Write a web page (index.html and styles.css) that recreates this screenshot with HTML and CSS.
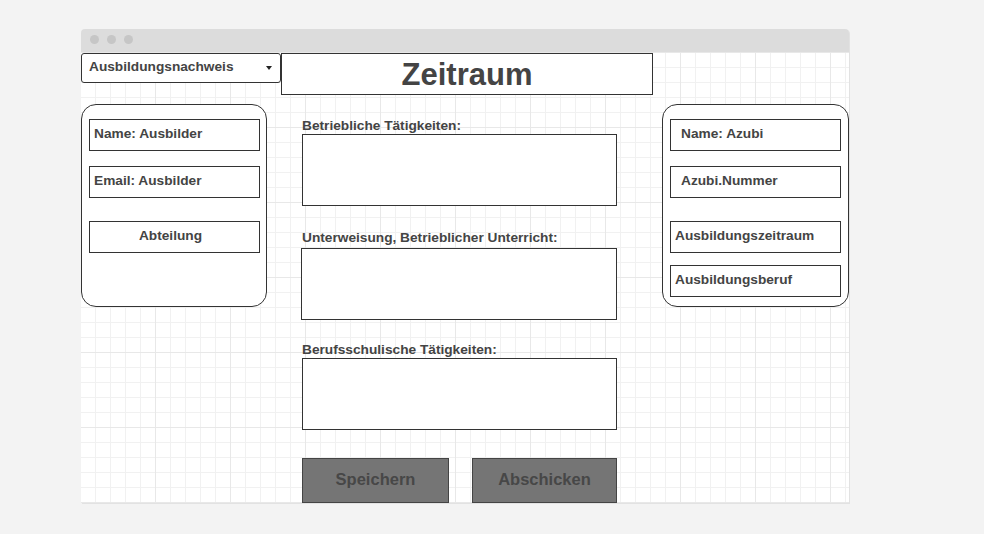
FILE: index.html
```html
<!DOCTYPE html>
<html lang="de">
<head>
<meta charset="utf-8">
<title>Ausbildungsnachweis</title>
<link rel="stylesheet" href="styles.css">
</head>
<body>
<div class="window">
  <div class="titlebar">
    <span class="dot"></span><span class="dot"></span><span class="dot"></span>
  </div>
  <div class="canvas">
    <div class="header">
      <div class="dropdown"><span class="dropdown-text">Ausbildungsnachweis</span><span class="caret"></span></div>
      <div class="title">Zeitraum</div>
    </div>
    <div class="main">
      <div class="card card-left">
        <div class="field">Name: Ausbilder</div>
        <div class="field">Email: Ausbilder</div>
        <div class="field field-center field-gap">Abteilung</div>
      </div>
      <div class="center">
        <div class="section s1">
          <div class="label">Betriebliche Tätigkeiten:</div>
          <div class="textbox"></div>
        </div>
        <div class="section s2">
          <div class="label">Unterweisung, Betrieblicher Unterricht:</div>
          <div class="textbox textbox-wide"></div>
        </div>
        <div class="section s3">
          <div class="label">Berufsschulische Tätigkeiten:</div>
          <div class="textbox"></div>
        </div>
        <div class="buttons">
          <div class="btn btn-save">Speichern</div>
          <div class="btn btn-send">Abschicken</div>
        </div>
      </div>
      <div class="card card-right">
        <div class="field field-indent">Name: Azubi</div>
        <div class="field field-indent">Azubi.Nummer</div>
        <div class="field field-gap">Ausbildungszeitraum</div>
        <div class="field">Ausbildungsberuf</div>
      </div>
    </div>
  </div>
</div>
</body>
</html>
```
FILE: styles.css
```css
* { box-sizing: border-box; }
html, body { margin: 0; padding: 0; }
body {
  background: #f3f3f3;
  font-family: "Liberation Sans", Arial, sans-serif;
  color: #444;
  width: 984px;
  height: 534px;
  overflow: hidden;
}
.window {
  margin: 29px 0 0 81px;
  width: 768px;
  height: 474px;
  display: flex;
  flex-direction: column;
  box-shadow: 1px 1px 0 #e2e2e2;
  border-radius: 4px 4px 0 0;
}
.titlebar {
  height: 23px;
  background: #dcdcdc;
  border-radius: 4px 4px 0 0;
  display: flex;
  align-items: flex-start;
  gap: 8px;
  padding: 6px 0 0 9px;
}
.dot {
  width: 9px;
  height: 9px;
  border-radius: 50%;
  background: #c6c6c6;
}
.canvas {
  flex: 1;
  background-color: #fff;
  background-image:
    linear-gradient(to right, #e8e8e8 1px, transparent 1px),
    linear-gradient(to bottom, #e8e8e8 1px, transparent 1px),
    linear-gradient(to right, #f1f1f1 1px, transparent 1px),
    linear-gradient(to bottom, #f1f1f1 1px, transparent 1px);
  background-size: 75px 75px, 75px 75px, 15px 15px, 15px 15px;
  background-position: -1px 0, -1px 0, -1px 0, -1px 0;
  display: flex;
  flex-direction: column;
}
.header {
  display: flex;
  align-items: flex-start;
  margin-top: 1px;
}
.dropdown {
  width: 200px;
  height: 30px;
  border: 1px solid #333;
  border-radius: 3px;
  background: #fff;
  display: flex;
  align-items: flex-start;
  padding: 5px 8px 0 7px;
  font-weight: bold;
  font-size: 13.7px;
  line-height: 15px;
}
.caret {
  margin-left: auto;
  margin-top: 7px;
  width: 0;
  height: 0;
  border-left: 3px solid transparent;
  border-right: 3px solid transparent;
  border-top: 4px solid #222;
}
.title {
  width: 372px;
  height: 42px;
  border: 1px solid #333;
  background: #fff;
  text-align: center;
  font-weight: bold;
  font-size: 31px;
  line-height: 40px;
  padding-top: 1px;
}
.main {
  display: flex;
  align-items: flex-start;
  margin-top: 9px;
}
.card {
  height: 203px;
  border: 1px solid #333;
  border-radius: 15px;
  background: #fff;
  display: flex;
  flex-direction: column;
  gap: 15px;
  padding-top: 14px;
}
.card-left {
  width: 186px;
  padding-left: 7px;
}
.card-right {
  width: 187px;
  padding-left: 7px;
  margin-left: 45px;
}
.field {
  width: 171px;
  height: 32px;
  border: 1px solid #333;
  background: #fff;
  font-weight: bold;
  font-size: 13.7px;
  line-height: 16px;
  padding: 6px 0 0 4px;
  white-space: nowrap;
}
.field-indent { padding-left: 10px; }
.field-center { text-align: center; padding-left: 0; padding-right: 8px; }
.card .field-gap { margin-top: 8px; }
.card-right .field-gap + .field { margin-top: -3px; }
.center {
  width: 315px;
  margin-left: 35px;
  padding-top: 14px;
  display: flex;
  flex-direction: column;
}
.label {
  font-weight: bold;
  font-size: 13.7px;
  line-height: 15px;
  white-space: nowrap;
}
.textbox {
  width: 315px;
  height: 72px;
  border: 1px solid #333;
  background: #fff;
}
.textbox-wide {
  width: 316px;
  margin-left: -1px;
}
.s1 .label { margin-bottom: 1px; }
.s2 { margin-top: 24px; }
.s2 .label { margin-bottom: 3px; }
.s3 { margin-top: 22px; }
.s3 .label { margin-bottom: 1px; }
.buttons {
  display: flex;
  gap: 23px;
  margin-top: 28px;
}
.btn {
  height: 45px;
  border: 1px solid #444;
  background: #757575;
  color: #474747;
  font-weight: bold;
  font-size: 16.5px;
  display: flex;
  align-items: center;
  justify-content: center;
  padding-bottom: 2px;
}
.btn-save { width: 147px; }
.btn-send { width: 145px; }
```
